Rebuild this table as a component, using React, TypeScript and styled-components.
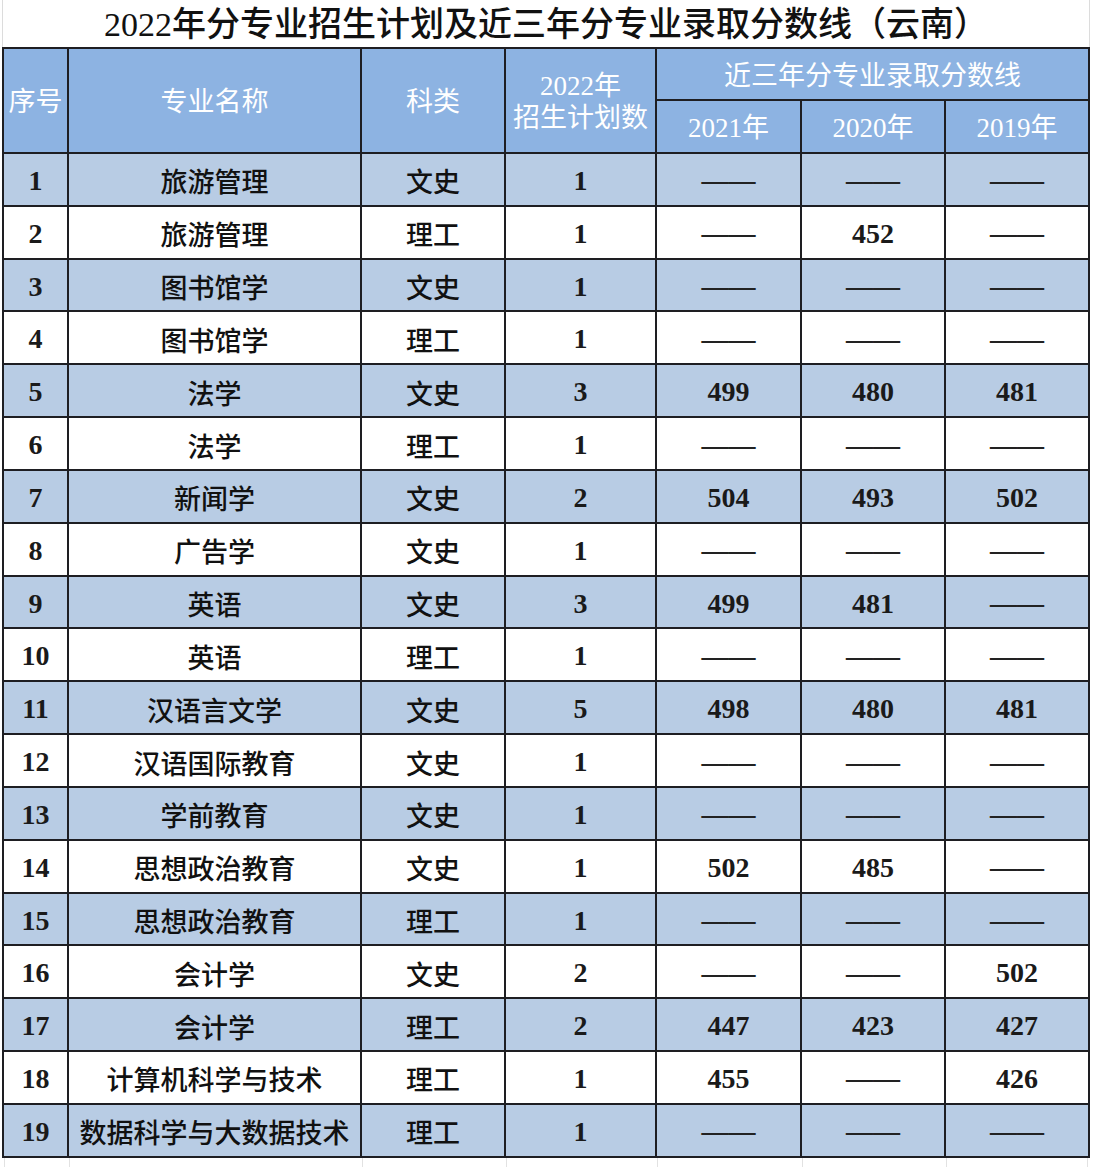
import React from "react";
import styled, { createGlobalStyle } from "styled-components";

const Global = createGlobalStyle`
  html, body { margin: 0; padding: 0; background: #ffffff; }
  body { font-family: "Liberation Serif", "Noto Sans CJK SC", serif; }
`;

const COLS = "63px 291px 142px 149px 143px 142px 142px";

const Page = styled.div`
  width: 1100px;
  display: flex;
  flex-direction: column;
`;

const TitleBar = styled.div`
  margin-left: 2px;
  width: 1088px;
  height: 47px;
  box-sizing: border-box;
  border-left: 1px solid #dcdcdc;
  border-right: 1px solid #dcdcdc;
  display: flex;
  align-items: center;
  justify-content: center;
  font-family: "Liberation Serif", "Noto Sans CJK SC", serif;
  font-size: 34px;
  font-weight: 500;
  color: #111;
  padding-bottom: 4px;
`;

const Grid = styled.div`
  margin-left: 2px;
  width: 1088px;
  box-sizing: border-box;
  display: grid;
  grid-template-columns: ${COLS};
  grid-template-rows: 50px 51px repeat(19, 50.84px);
  gap: 2px;
  padding: 2px;
  background: #1e1e22;
`;

const HeadCell = styled.div<{ $rows?: number; $cols?: number }>`
  grid-row: span ${(p) => p.$rows ?? 1};
  grid-column: span ${(p) => p.$cols ?? 1};
  background: #8db3e2;
  color: #ffffff;
  display: flex;
  flex-direction: column;
  align-items: center;
  justify-content: center;
  text-align: center;
  font-size: 27px;
  line-height: 32px;
  font-weight: 400;
  padding-top: 3px;
  box-sizing: border-box;
`;

const Cell = styled.div<{ $alt: boolean }>`
  background: ${(p) => (p.$alt ? "#b8cce4" : "#ffffff")};
  color: #111;
  display: flex;
  align-items: center;
  justify-content: center;
  font-size: 27px;
  font-weight: 500;
  white-space: nowrap;
  padding-top: 3px;
  box-sizing: border-box;
`;

const Num = styled.span`
  font-size: 28px;
  font-weight: 700;
  color: #1a1a1a;
`;

const Dash = styled.span`
  font-size: 27px;
  font-weight: 700;
  color: #222;
`;

const Footer = styled.div`
  margin-left: 2px;
  width: 1088px;
  height: 10px;
  display: grid;
  grid-template-columns: ${COLS};
  column-gap: 2px;
  padding: 0 2px;
  box-sizing: border-box;
`;

const FootCell = styled.div<{ $last?: boolean }>`
  border-left: 1px solid #e2e2e2;
  ${(p) => (p.$last ? "border-right: 1px solid #e2e2e2;" : "")}
`;

const D = "——";

type Row = [string, string, string, string, string, string];

const rows: Row[] = [
  ["旅游管理", "文史", "1", D, D, D],
  ["旅游管理", "理工", "1", D, "452", D],
  ["图书馆学", "文史", "1", D, D, D],
  ["图书馆学", "理工", "1", D, D, D],
  ["法学", "文史", "3", "499", "480", "481"],
  ["法学", "理工", "1", D, D, D],
  ["新闻学", "文史", "2", "504", "493", "502"],
  ["广告学", "文史", "1", D, D, D],
  ["英语", "文史", "3", "499", "481", D],
  ["英语", "理工", "1", D, D, D],
  ["汉语言文学", "文史", "5", "498", "480", "481"],
  ["汉语国际教育", "文史", "1", D, D, D],
  ["学前教育", "文史", "1", D, D, D],
  ["思想政治教育", "文史", "1", "502", "485", D],
  ["思想政治教育", "理工", "1", D, D, D],
  ["会计学", "文史", "2", D, D, "502"],
  ["会计学", "理工", "2", "447", "423", "427"],
  ["计算机科学与技术", "理工", "1", "455", D, "426"],
  ["数据科学与大数据技术", "理工", "1", D, D, D],
];

const isNum = (s: string) => /^\d+$/.test(s);

const renderValue = (v: string) => {
  if (v === D) return <Dash>{v}</Dash>;
  if (isNum(v)) return <Num>{v}</Num>;
  return v;
};

export default function App() {
  return (
    <>
      <Global />
      <Page>
        <TitleBar>2022年分专业招生计划及近三年分专业录取分数线（云南）</TitleBar>
        <Grid>
          <HeadCell $rows={2}>序号</HeadCell>
          <HeadCell $rows={2}>专业名称</HeadCell>
          <HeadCell $rows={2}>科类</HeadCell>
          <HeadCell $rows={2}>
            <span>2022年</span>
            <span>招生计划数</span>
          </HeadCell>
          <HeadCell $cols={3}>近三年分专业录取分数线</HeadCell>
          <HeadCell>2021年</HeadCell>
          <HeadCell>2020年</HeadCell>
          <HeadCell>2019年</HeadCell>
          {rows.map((r, i) => {
            const alt = i % 2 === 0;
            const vals = [String(i + 1), ...r];
            return vals.map((v, j) => (
              <Cell key={`${i}-${j}`} $alt={alt}>
                {renderValue(v)}
              </Cell>
            ));
          })}
        </Grid>
        <Footer>
          {[0, 1, 2, 3, 4, 5, 6].map((k) => (
            <FootCell key={k} $last={k === 6} />
          ))}
        </Footer>
      </Page>
    </>
  );
}
